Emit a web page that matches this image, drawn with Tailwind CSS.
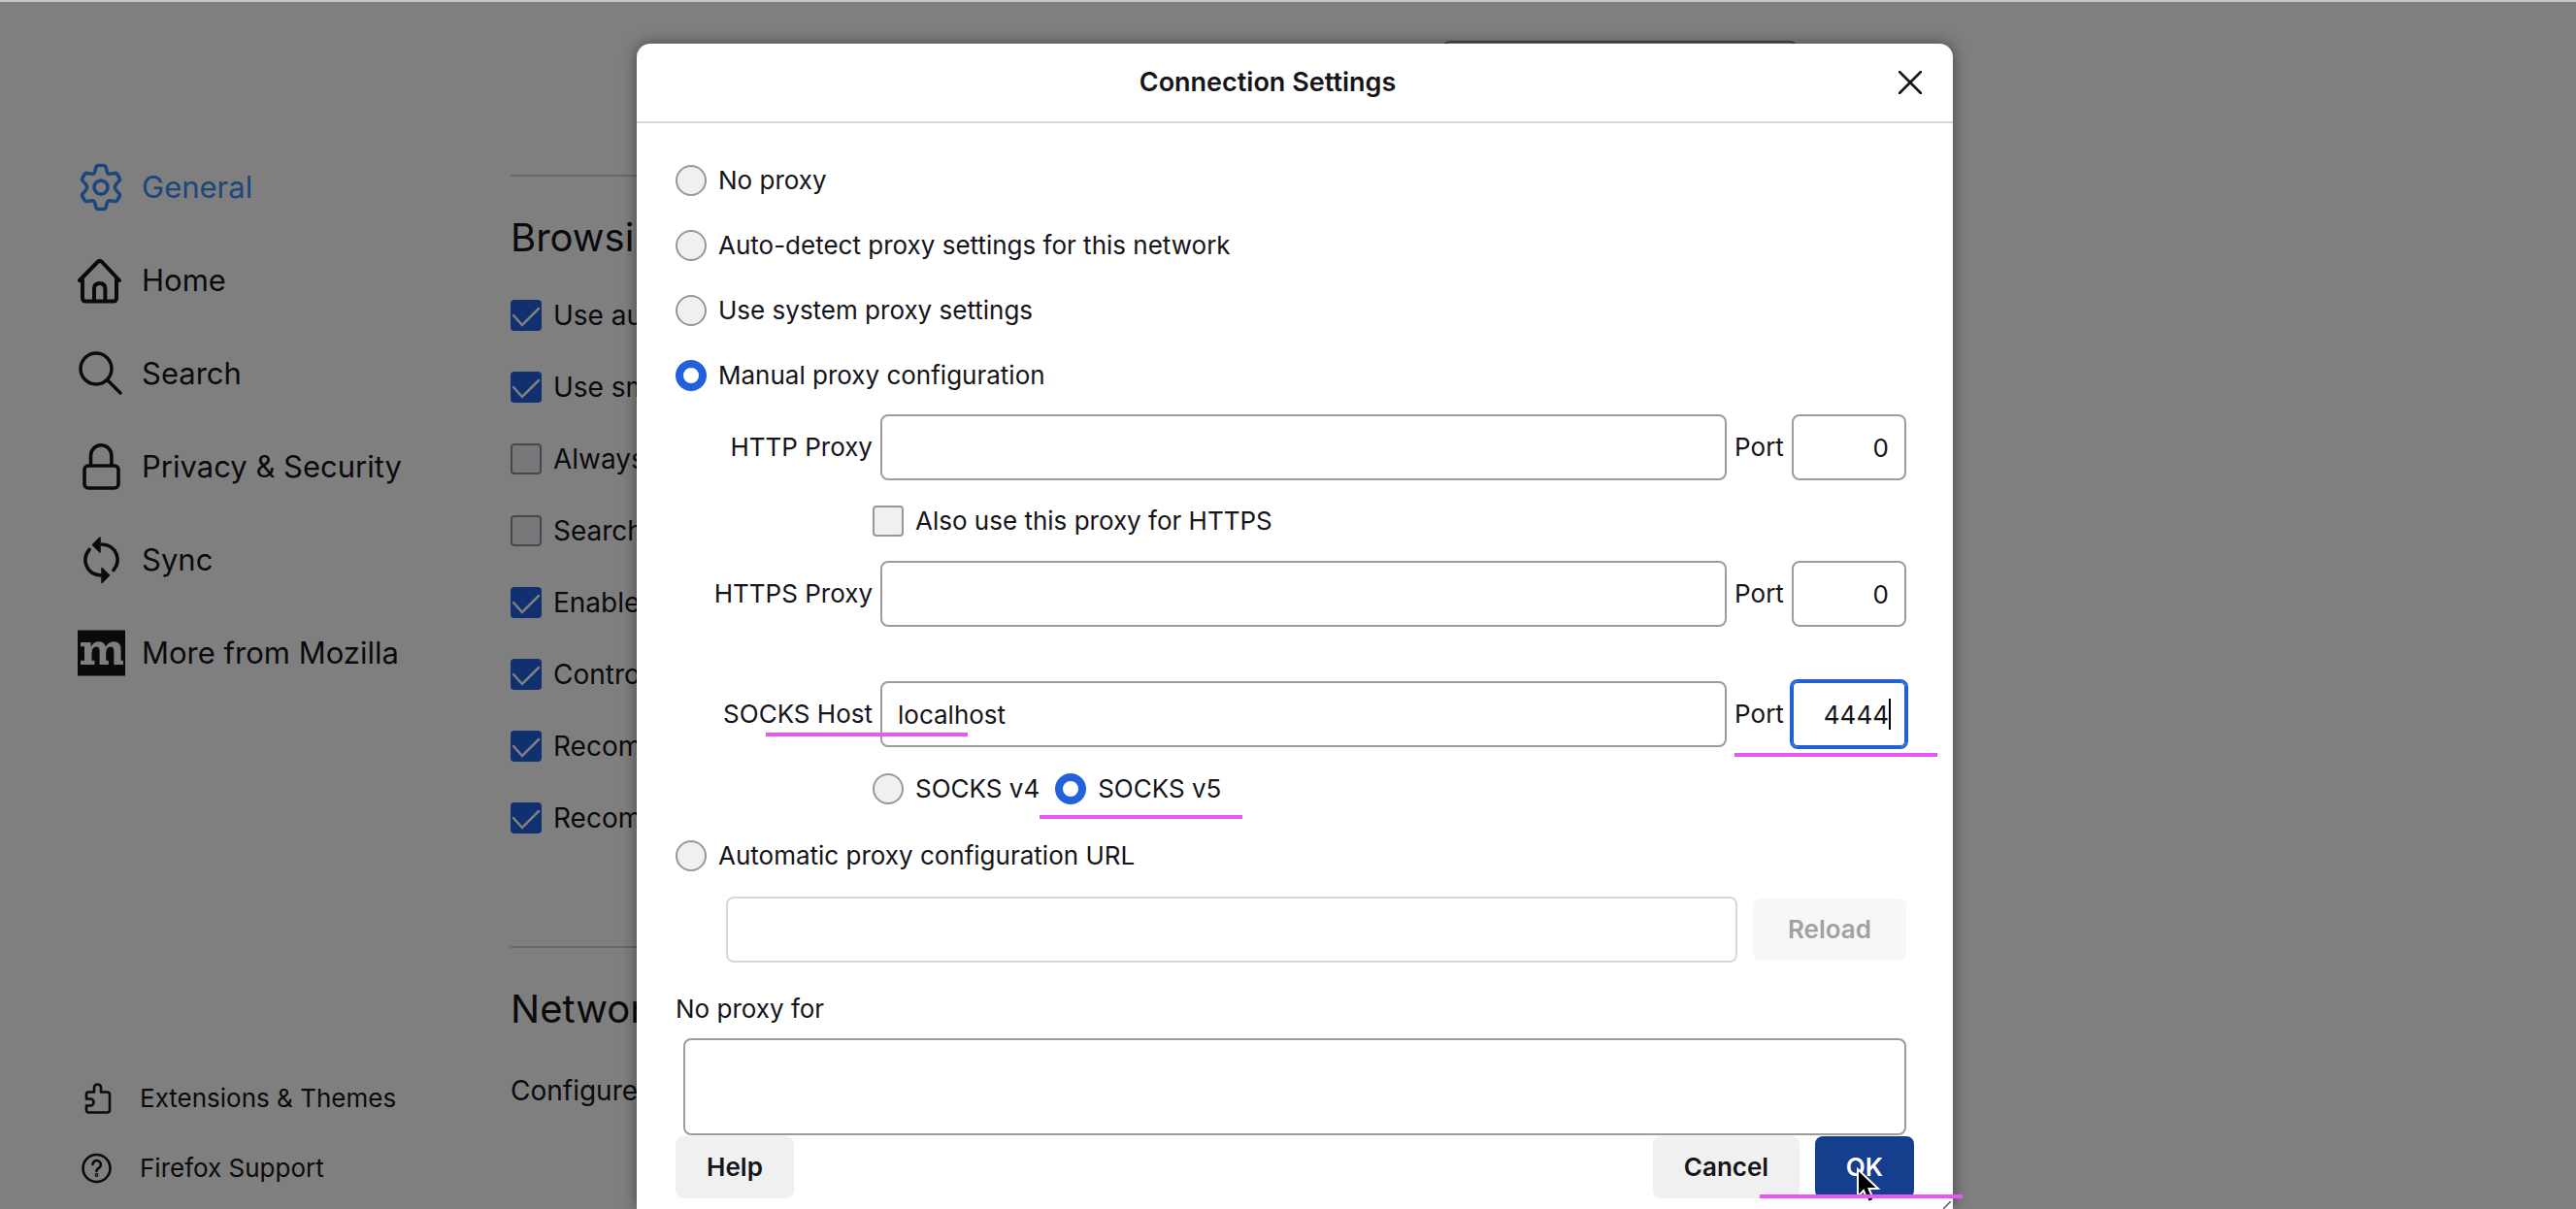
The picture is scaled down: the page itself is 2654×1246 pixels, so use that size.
<!DOCTYPE html>
<html lang="en">
<head>
<meta charset="utf-8">
<meta name="viewport" content="width=device-width, initial-scale=1">
<title>Settings</title>
<script src="https://cdn.jsdelivr.net/npm/@tailwindcss/browser@4"></script>
</head>
<body class="bg-white font-['Inter',sans-serif] text-[26px] leading-8 text-[#15141a]">
<div class="relative flex h-screen overflow-hidden border-t-2 border-[#c8c8c8]">
  <aside class="flex w-[526px] shrink-0 flex-col pb-[6px] pl-20 pt-[143px]">
    <nav aria-label="Categories" class="flex flex-col text-[31px]">
      <a href="#general" class="flex h-24 items-center gap-4 text-[#3a8cf8]">
        <svg class="size-[50px]" viewBox="0 0 50 50" fill="none" stroke="currentColor" stroke-width="3.6" stroke-linejoin="round"><circle cx="24" cy="25" r="7"/><path d="M21.500 2.500h5q2 0 2.600 2l1.200 4.500q.6 2 2.700 2.300l5-.9q2-.3 3 1.400l2 3.600q1 1.700-.4 3.200l-2.600 2.800q-1.600 1.900-1.600 3.600t1.600 3.600l2.600 2.800q1.400 1.500.4 3.200l-2 3.600q-1 1.700-3 1.400l-5-.9q-2.100.3-2.700 2.300l-1.200 4.500q-.6 2-2.600 2h-5q-2 0-2.600-2l-1.200-4.500q-.6-2-2.700-2.300l-5 .9q-2 .3-3-1.400l-2-3.600q-1-1.700.4-3.200L8 28.600Q9.600 26.700 9.600 25T8 21.400l-2.600-2.800Q4 17.100 5 15.400l2-3.600q1-1.700 3-1.400l5 .9q2.100-.3 2.700-2.300l1.200-4.500q.6-2 2.600-2z"/></svg>
        General</a>
      <a href="#home" class="flex h-24 items-center gap-4">
        <svg class="size-[50px]" viewBox="0 0 50 50" fill="none" stroke="currentColor" stroke-width="4" stroke-linecap="round" stroke-linejoin="round"><path d="M2 25 20.500 6q2.300-2.200 4.600 0L43 25M5 23v20q0 3.500 3.500 3.500h28q3.500 0 3.500-3.500V23M17 46V33.500q0-5.500 5.700-5.500t5.700 5.500V46"/></svg>
        Home</a>
      <a href="#search" class="flex h-24 items-center gap-4">
        <svg class="size-[50px]" viewBox="0 0 50 50" fill="none" stroke="currentColor" stroke-width="3.400" stroke-linecap="round"><circle cx="19" cy="20" r="16"/><path d="m31 32 13 13"/></svg>
        Search</a>
      <a href="#privacy" class="flex h-24 items-center gap-4">
        <svg class="size-[50px]" viewBox="0 0 50 50" fill="none" stroke="currentColor" stroke-width="3.600"><rect x="7" y="24" width="35" height="23" rx="4"/><path d="M13.500 24V13.500a10.700 10.700 0 0 1 21.400 0V24"/></svg>
        Privacy &amp; Security</a>
      <a href="#sync" class="flex h-24 items-center gap-4">
        <svg class="size-[50px]" viewBox="0 0 50 50" fill="none" stroke="currentColor" stroke-width="3.600" stroke-linecap="round"><path d="M12 14.500C4 24 8 40 24 41M25 9c16 1 20 17 12 26.500"/><path d="M23 2v15l-7.500-7.500zM25 33.500v15l7.500-7.500z" fill="currentColor" stroke-width="1.500" stroke-linejoin="round"/></svg>
        Sync</a>
      <a href="#more" class="flex h-24 items-center gap-4">
        <svg class="size-[50px]" viewBox="0 0 50 50"><path d="M0 1.500h49v47H0z" fill="currentColor"/><path d="M3 14h10.500v4.500q3-5.200 8.200-5.200 5.600 0 7.300 5.200 3-5.200 8.300-5.200 7.300 0 7.300 8.200v11.300H47V37H37.400V23q0-4.600-3.400-4.600-4.800 0-4.800 7v7.400h2.600V37h-9.200V23q0-4.600-3.200-4.600-4.900 0-4.900 7v7.400h3V37H3v-4.200h4V18.200H3z" fill="#fff"/></svg>
        More from Mozilla</a>
    </nav>
    <nav aria-label="Help" class="mt-auto flex flex-col">
      <a href="#extensions" class="flex h-[72px] items-center gap-7 pl-1">
        <svg class="size-8" viewBox="0 0 32 32" fill="none" stroke="currentColor" stroke-width="2.600" stroke-linejoin="round"><path d="M7 9.500h6V5a3.500 3.500 0 0 1 7 0v4.500h6.500q2.500 0 2.500 2.500v16q0 2.500-2.500 2.500h-19Q5 30.500 5 28v-4.500h4a3.500 3.500 0 0 0 0-7H5V12q0-2.500 2-2.500z"/></svg>
        Extensions &amp; Themes</a>
      <a href="#support" class="flex h-[72px] items-center gap-7 pl-1">
        <svg class="size-8" viewBox="0 0 32 32" fill="none" stroke="currentColor" stroke-width="2.600" stroke-linecap="round"><circle cx="15.500" cy="16" r="14"/><path d="M11.500 12a4.200 4.200 0 1 1 6.500 3.700q-2.500 1.300-2.500 3.300"/><circle cx="15.500" cy="23" r=".6"/></svg>
        Firefox Support</a>
    </nav>
  </aside>

  <main class="w-[1326px] shrink-0 pt-10">
    <div class="flex justify-end"><input type="search" aria-label="Find in Settings" class="h-16 w-[366px] rounded-lg border-2 border-[#8f8f9d] bg-white px-4"></div>
    <section class="mt-[74px] border-t-2 border-[#d0d0d0] pt-[35px]">
      <h2 class="text-[40px] leading-[56px]">Browsing</h2>
      <div class="mt-[15px] flex flex-col text-[28px]">
        <label class="flex h-[74px] items-center gap-3"><span class="grid size-8"><input type="checkbox" checked class="col-start-1 row-start-1 size-8 appearance-none rounded-sm bg-[#2260e0]"><svg class="col-start-1 row-start-1 size-8" viewBox="0 0 32 32" fill="none" stroke="#fff" stroke-width="2.500" stroke-linecap="round"><path d="m3 16 9 10L29 9"/></svg></span>Use autoscrolling</label>
        <label class="flex h-[74px] items-center gap-3"><span class="grid size-8"><input type="checkbox" checked class="col-start-1 row-start-1 size-8 appearance-none rounded-sm bg-[#2260e0]"><svg class="col-start-1 row-start-1 size-8" viewBox="0 0 32 32" fill="none" stroke="#fff" stroke-width="2.500" stroke-linecap="round"><path d="m3 16 9 10L29 9"/></svg></span>Use smooth scrolling</label>
        <label class="flex h-[74px] items-center gap-3"><input type="checkbox" class="size-8 appearance-none rounded-sm border-2 border-[#8f8f9d] bg-[#f0f0f4]">Always show scrollbars</label>
        <label class="flex h-[74px] items-center gap-3"><input type="checkbox" class="size-8 appearance-none rounded-sm border-2 border-[#8f8f9d] bg-[#f0f0f4]">Search for text when you start typing</label>
        <label class="flex h-[74px] items-center gap-3"><span class="grid size-8"><input type="checkbox" checked class="col-start-1 row-start-1 size-8 appearance-none rounded-sm bg-[#2260e0]"><svg class="col-start-1 row-start-1 size-8" viewBox="0 0 32 32" fill="none" stroke="#fff" stroke-width="2.500" stroke-linecap="round"><path d="m3 16 9 10L29 9"/></svg></span>Enable picture-in-picture video controls</label>
        <label class="flex h-[74px] items-center gap-3"><span class="grid size-8"><input type="checkbox" checked class="col-start-1 row-start-1 size-8 appearance-none rounded-sm bg-[#2260e0]"><svg class="col-start-1 row-start-1 size-8" viewBox="0 0 32 32" fill="none" stroke="#fff" stroke-width="2.500" stroke-linecap="round"><path d="m3 16 9 10L29 9"/></svg></span>Control media via keyboard, headset, or virtual interface</label>
        <label class="flex h-[74px] items-center gap-3"><span class="grid size-8"><input type="checkbox" checked class="col-start-1 row-start-1 size-8 appearance-none rounded-sm bg-[#2260e0]"><svg class="col-start-1 row-start-1 size-8" viewBox="0 0 32 32" fill="none" stroke="#fff" stroke-width="2.500" stroke-linecap="round"><path d="m3 16 9 10L29 9"/></svg></span>Recommend extensions as you browse</label>
        <label class="flex h-[74px] items-center gap-3"><span class="grid size-8"><input type="checkbox" checked class="col-start-1 row-start-1 size-8 appearance-none rounded-sm bg-[#2260e0]"><svg class="col-start-1 row-start-1 size-8" viewBox="0 0 32 32" fill="none" stroke="#fff" stroke-width="2.500" stroke-linecap="round"><path d="m3 16 9 10L29 9"/></svg></span>Recommend features as you browse</label>
      </div>
    </section>
    <section class="mt-[95px] border-t-2 border-[#d0d0d0] pt-[35px]">
      <h2 class="text-[40px] leading-[56px]">Network Settings</h2>
      <p class="mt-10 text-[28px]">Configure how Firefox connects to the internet.</p>
    </section>
  </main>

  <div class="absolute inset-0 flex justify-center bg-black/50 pl-[14px] pt-[43px]">
    <div role="dialog" aria-labelledby="dialog-title" class="relative flex w-[1356px] max-w-full flex-col rounded-t-[14px] bg-white shadow-[0_0_16px_rgba(0,0,0,0.45)]">
      <header class="flex h-[82px] shrink-0 items-center border-b-2 border-[#d8d8da] pl-2 pr-6">
        <h1 id="dialog-title" class="flex-1 text-center text-[27px] font-semibold">Connection Settings</h1>
        <button type="button" aria-label="Close" class="grid w-10 place-items-center"><svg class="size-6" viewBox="0 0 24 24" fill="none" stroke="currentColor" stroke-width="2.600" stroke-linecap="round"><path d="m1 1 22 22M23 1 1 23"/></svg></button>
      </header>
      <form class="flex flex-col pl-10 pr-12 pt-[43px]">
        <div class="flex flex-col gap-[35px]">
          <label class="flex items-center gap-3"><input type="radio" name="proxy" class="size-8 appearance-none rounded-full border-2 border-[#98989c] bg-[#f0f0f0]">No proxy</label>
          <label class="flex items-center gap-3"><input type="radio" name="proxy" class="size-8 appearance-none rounded-full border-2 border-[#98989c] bg-[#f0f0f0]">Auto-detect proxy settings for this network</label>
          <label class="flex items-center gap-3"><input type="radio" name="proxy" class="size-8 appearance-none rounded-full border-2 border-[#98989c] bg-[#f0f0f0]">Use system proxy settings</label>
          <label class="flex items-center gap-3"><input type="radio" name="proxy" checked class="size-8 appearance-none rounded-full border-8 border-[#2260dc] bg-white">Manual proxy configuration</label>
        </div>
        <div class="mt-6 flex items-center">
          <label for="http" class="mr-2 w-[203px] text-right">HTTP Proxy</label>
          <input id="http" type="text" class="h-[68px] min-w-0 flex-1 rounded-lg border-2 border-[#9c9c9f] px-4">
          <label for="http-port" class="w-[67px] text-center">Port</label>
          <input id="http-port" type="text" inputmode="numeric" value="0" class="h-[68px] w-[118px] rounded-lg border-2 border-[#9c9c9f] px-4 text-right">
        </div>
        <label class="ml-[203px] mt-[26px] flex items-center gap-3"><input type="checkbox" class="size-8 appearance-none rounded-sm border-2 border-[#98989c] bg-[#f0f0f0]">Also use this proxy for HTTPS</label>
        <div class="mt-[25px] flex items-center">
          <label for="https" class="mr-2 w-[203px] text-right">HTTPS Proxy</label>
          <input id="https" type="text" class="h-[68px] min-w-0 flex-1 rounded-lg border-2 border-[#9c9c9f] px-4">
          <label for="https-port" class="w-[67px] text-center">Port</label>
          <input id="https-port" type="text" inputmode="numeric" value="0" class="h-[68px] w-[118px] rounded-lg border-2 border-[#9c9c9f] px-4 text-right">
        </div>
        <div class="relative mt-14 flex items-center">
          <label for="socks" class="mr-2 w-[203px] text-right">SOCKS Host</label>
          <input id="socks" type="text" value="localhost" class="h-[68px] min-w-0 flex-1 rounded-lg border-2 border-[#9c9c9f] px-4">
          <label for="socks-port" class="w-[67px] text-center">Port</label>
          <div class="relative">
            <input id="socks-port" type="text" inputmode="numeric" value="4444" class="block h-[68px] w-[118px] rounded-md border-2 border-[#2260d2] px-4 text-right ring-2 ring-[#2260d2]">
            <span class="absolute right-4 top-[18px] h-8 w-0.5 bg-black"></span>
          </div>
          <span class="absolute left-[93px] top-[53px] h-1 w-[208px] bg-[#ea55f5]"></span>
          <span class="absolute -right-8 top-[74px] h-1 w-[209px] bg-[#ea55f5]"></span>
        </div>
        <div class="relative ml-[203px] mt-[27px] flex items-center gap-4">
          <label class="flex items-center gap-3"><input type="radio" name="socks" class="size-8 appearance-none rounded-full border-2 border-[#98989c] bg-[#f0f0f0]">SOCKS v4</label>
          <label class="flex items-center gap-3"><input type="radio" name="socks" checked class="size-8 appearance-none rounded-full border-8 border-[#2260dc] bg-white">SOCKS v5</label>
          <span class="absolute left-[172px] top-[43px] h-1 w-[209px] bg-[#ea55f5]"></span>
        </div>
        <label class="mt-[37px] flex items-center gap-3"><input type="radio" name="proxy" class="size-8 appearance-none rounded-full border-2 border-[#98989c] bg-[#f0f0f0]">Automatic proxy configuration URL</label>
        <div class="mt-[26px] flex items-center gap-4 pl-[52px]">
          <input type="text" disabled aria-label="Automatic proxy configuration URL" class="h-[68px] min-w-0 flex-1 rounded-lg border-2 border-[#d8d8da] px-4">
          <button type="button" disabled class="h-16 w-[158px] rounded-lg bg-[#f7f7f8] font-semibold text-[#a1a1a3]">Reload</button>
        </div>
        <label for="no-proxy" class="mt-8">No proxy for</label>
        <textarea id="no-proxy" class="ml-2 mt-[14px] h-[100px] resize-none rounded-lg border-2 border-[#9c9c9f] px-4"></textarea>
      </form>
      <footer class="relative mt-px flex gap-4 px-10 font-semibold">
        <button type="button" class="h-16 w-[122px] rounded-lg bg-[#f0f0f1]">Help</button>
        <button type="button" class="ml-auto h-16 w-[151px] rounded-lg bg-[#f0f0f1]">Cancel</button>
        <button type="button" class="h-16 w-[102px] rounded-lg bg-[#153e8c] text-white">OK</button>
        <svg class="absolute right-[72px] top-[32px] h-10 w-7" viewBox="0 0 28 40"><path d="M2 2v28l6-6 5 12 5.500-2.300L13.500 22H23z" fill="#000" stroke="#fff" stroke-width="2"/></svg>
        <span class="absolute -right-2.5 top-[60px] h-1 w-[209px] bg-[#ea55f5]"></span>
      </footer>
      <svg class="absolute bottom-0 right-0.5 size-2" viewBox="0 0 8 8" stroke="#555" stroke-width="1.500"><path d="M0 8 8 0"/></svg>
    </div>
  </div>
</div>
</body>
</html>
